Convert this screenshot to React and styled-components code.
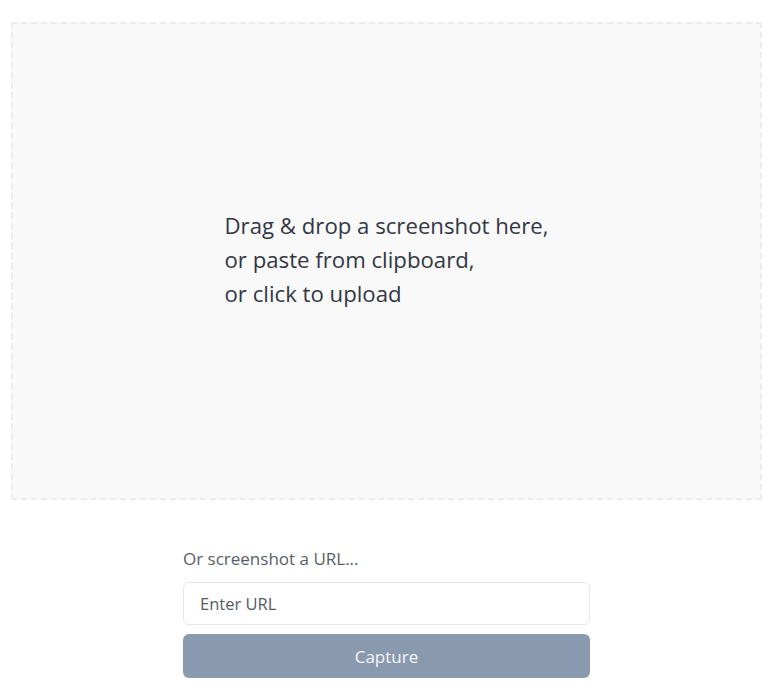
import React from "react"
import styled, { createGlobalStyle } from "styled-components"

const GlobalStyle = createGlobalStyle`
  html, body {
    margin: 0;
    padding: 0;
    background: #fff;
  }

  body {
    font-family: "Open Sans", "Noto Sans", sans-serif;
  }

  * {
    box-sizing: border-box;
  }
`

const App = () => {
  return (
    <Page>
      <GlobalStyle />
      <DropZone>
        <DropText>
          <p>Drag &amp; drop a screenshot here,</p>
          <p>or paste from clipboard,</p>
          <p>or click to upload</p>
        </DropText>
      </DropZone>
      <UrlForm>
        <UrlLabel>Or screenshot a URL...</UrlLabel>
        <UrlInput type="text" placeholder="Enter URL" />
        <CaptureButton>Capture</CaptureButton>
      </UrlForm>
    </Page>
  )
}

export default App

const Page = styled.div`
  padding: 22px 12px 0 11px;
  display: flex;
  flex-direction: column;
  align-items: center;
`

const DropZone = styled.div`
  width: 100%;
  height: 478px;
  border: 2px dashed #ececec;
  border-radius: 2px;
  background: #f9f9f9;
  display: flex;
  align-items: center;
  justify-content: center;
`

const DropText = styled.div`
  font-size: 22.2px;
  line-height: 34px;
  color: #333744;
  margin-bottom: 2px;

  p {
    margin: 0;
  }
`

const UrlForm = styled.div`
  width: 407px;
  margin-top: 48px;
  display: flex;
  flex-direction: column;
`

const UrlLabel = styled.label`
  font-size: 17px;
  line-height: 22px;
  color: #5a5e66;
  margin-bottom: 12px;
`

const UrlInput = styled.input`
  height: 43px;
  padding: 0 16px;
  border: 1px solid #e4e7ec;
  border-radius: 6px;
  font-family: inherit;
  font-size: 16.5px;
  color: #333;
  outline: none;

  &::placeholder {
    color: #555a62;
  }
`

const CaptureButton = styled.button`
  margin-top: 9px;
  height: 44px;
  border: none;
  border-radius: 6px;
  background: #8a9aae;
  color: #f4f6f9;
  font-family: inherit;
  font-size: 17px;
  cursor: pointer;
`
